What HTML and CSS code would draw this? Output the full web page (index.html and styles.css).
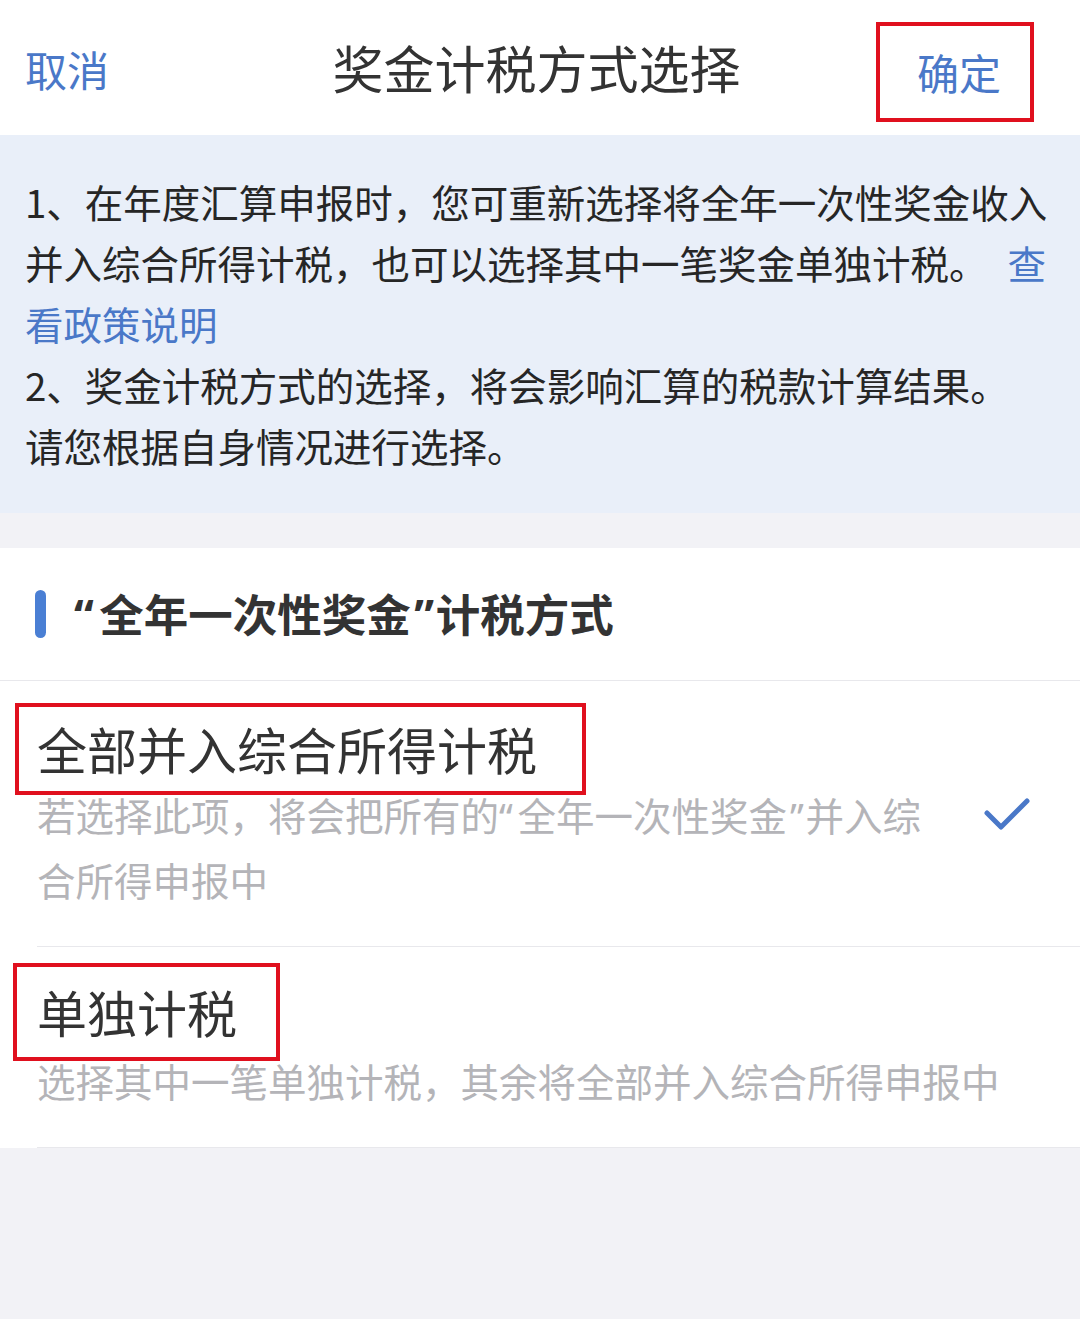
FILE: index.html
```html
<!DOCTYPE html>
<html lang="zh-CN">
<head>
<meta charset="utf-8">
<title>奖金计税方式选择</title>
<link rel="stylesheet" href="styles.css">
</head>
<body>
<div class="page">
  <header class="navbar">
    <span class="nav-btn nav-cancel">取消</span>
    <h1 class="nav-title">奖金计税方式选择</h1>
    <span class="nav-btn nav-confirm">确定</span>
  </header>

  <section class="notice">
    <p class="notice-line">1、在年度汇算申报时，您可重新选择将全年一次性奖金收入</p>
    <p class="notice-line">并入综合所得计税，也可以选择其中一笔奖金单独计税。<span class="link link-gap">查</span></p>
    <p class="notice-line"><span class="link">看政策说明</span></p>
    <p class="notice-line">2、奖金计税方式的选择，将会影响汇算的税款计算结果。</p>
    <p class="notice-line">请您根据自身情况进行选择。</p>
  </section>

  <div class="spacer"></div>

  <section class="panel">
    <div class="panel-head">
      <span class="panel-bar"></span>
      <h2 class="panel-title"><span class="q q-open">“</span>全年一次性奖金<span class="q q-close">”</span>计税方式</h2>
    </div>

    <div class="option">
      <div class="option-body">
        <div class="option-title option-title-a">全部并入综合所得计税</div>
        <p class="option-desc">若选择此项，将会把所有的<span class="q q-open">“</span>全年一次性奖金<span class="q q-close">”</span>并入综<br>合所得申报中</p>
      </div>
      <svg class="check" width="46" height="34" viewBox="0 0 46 34" aria-hidden="true">
        <path d="M3 16 L17 30 L43 4" fill="none" stroke="#4a78c8" stroke-width="5" stroke-linecap="round" stroke-linejoin="round"/>
      </svg>
    </div>

    <div class="option">
      <div class="option-body">
        <div class="option-title option-title-b">单独计税</div>
        <p class="option-desc">选择其中一笔单独计税，其余将全部并入综合所得申报中</p>
      </div>
    </div>
  </section>
</div>
</body>
</html>
```

FILE: styles.css
```css
* { box-sizing: border-box; }
html, body {
  margin: 0;
  padding: 0;
  background: #f2f2f6;
}
body {
  font-family: "Noto Sans CJK SC", "Noto Sans", sans-serif;
  color: #333;
}
.page {
  width: 1080px;
  min-height: 1319px;
  background: #f2f2f6;
}

/* nav */
.navbar {
  height: 135px;
  background: #fff;
  display: grid;
  grid-template-columns: 1fr auto 1fr;
  align-items: center;
  padding: 0 46px 0 25px;
}
.nav-btn {
  font-size: 42px;
  color: #4a78c8;
  line-height: 50px;
}
.nav-cancel { justify-self: start; margin-top: 2px; }
.nav-title {
  margin: -2px 0 0 14px;
  font-size: 51px;
  font-weight: 400;
  color: #333;
  line-height: 60px;
}
.nav-confirm {
  justify-self: end;
  border: 4px solid #e0101e;
  width: 158px;
  height: 100px;
  padding-left: 37px;
  line-height: 92px;
  margin-top: 8px;
}

/* notice */
.notice {
  background: #e9eff9;
  padding: 36px 0 36px 25px;
  height: 378px;
}
.notice-line {
  margin: 0;
  font-size: 38.5px;
  line-height: 61px;
  height: 61px;
  color: #262626;
  white-space: nowrap;
}
.link { color: #4a78c8; }
.link-gap { margin-left: 20px; }

.spacer { height: 35px; }

/* quotes: narrow Latin-style quotation marks */
.q { font-family: "Noto Sans", sans-serif; }
.q-open { padding-right: 0.12em; }
.q-close { padding-left: 0.08em; padding-right: 0.04em; }

/* panel */
.panel {
  background: #fff;
}
.panel-head {
  height: 133px;
  display: flex;
  align-items: center;
  padding-left: 35px;
  border-bottom: 1px solid #e8e8ec;
}
.panel-bar {
  width: 11px;
  height: 48px;
  border-radius: 6px;
  background: #4a7fd4;
  flex: none;
}
.panel-title {
  margin: 0 0 0 28px;
  font-size: 44.5px;
  font-weight: 700;
  color: #333;
  line-height: 60px;
}

.option {
  margin-left: 37px;
  padding: 22px 50px 35px 0;
  border-bottom: 1px solid #e8e8ec;
  display: flex;
  align-items: flex-start;
  justify-content: space-between;
}
.option + .option { padding-top: 16px; }
.option-body { display: flex; flex-direction: column; align-items: flex-start; }
.option-title {
  font-size: 50px;
  color: #333;
  border: 4px solid #e0101e;
  white-space: nowrap;
}
.option-title-a {
  margin-left: -22px;
  padding: 0 45px 0 18px;
  line-height: 82px;
  height: 92px;
}
.option-title-b {
  margin-left: -24px;
  padding: 0 39px 0 20px;
  line-height: 88px;
  height: 98px;
}
.option-desc {
  margin: -12px 0 0;
  font-size: 38.5px;
  line-height: 63px;
  color: #b4b4b8;
  white-space: nowrap;
}
.check {
  flex: none;
  margin-top: 94px;
}
```
